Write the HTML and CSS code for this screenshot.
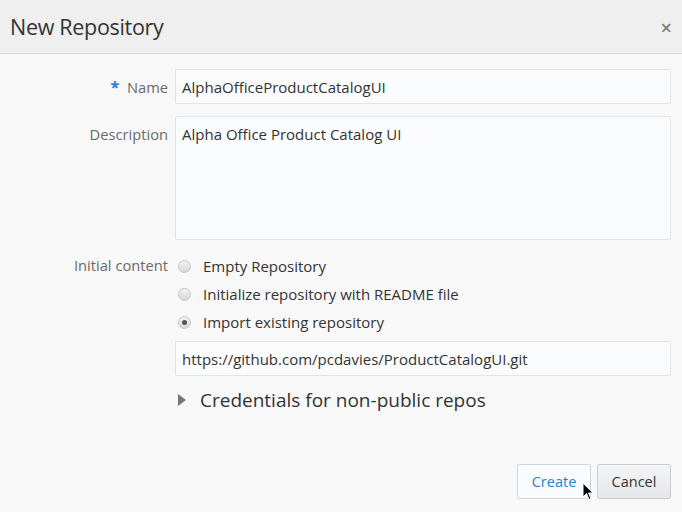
FILE: index.html
```html
<!DOCTYPE html>
<html>
<head>
<meta charset="utf-8">
<link rel="stylesheet" href="styles.css">
</head>
<body>
<div class="dialog">
  <div class="header">
    <h1 class="title">New Repository</h1>
    <span class="close">×</span>
  </div>
  <div class="content">
    <div class="row">
      <label class="label"><span class="req">*</span> Name</label>
      <div class="field"><div class="input">AlphaOfficeProductCatalogUI</div></div>
    </div>
    <div class="row">
      <label class="label">Description</label>
      <div class="field"><div class="input textarea">Alpha Office Product Catalog UI</div></div>
    </div>
    <div class="row row-radio">
      <label class="label">Initial content</label>
      <div class="field">
        <div class="radio"><span class="dot"></span>Empty Repository</div>
        <div class="radio"><span class="dot"></span>Initialize repository with README file</div>
        <div class="radio"><span class="dot checked"></span>Import existing repository</div>
        <div class="input url">https://github.com/pcdavies/ProductCatalogUI.git</div>
        <div class="cred"><span class="tri"></span>Credentials for non-public repos</div>
      </div>
    </div>
  </div>
  <div class="footer">
    <button class="btn primary">Create</button>
    <button class="btn">Cancel</button>
    <svg class="cursor" width="12" height="19" viewBox="0 0 12 19"><path d="M1 1 L1 15 L4.5 11.5 L7 17.5 L9 16.5 L6.5 11 L11 11 Z" fill="#000" stroke="#fff" stroke-width="1"/></svg>
  </div>
</div>
</body>
</html>
```
FILE: styles.css
```css
html, body {
  margin: 0;
  padding: 0;
}
body {
  width: 682px;
  height: 512px;
  overflow: hidden;
  background: #f8f8f8;
  font-family: "Open Sans", "Noto Sans", sans-serif;
  font-size: 15px;
  color: #333;
}
.dialog {
  display: flex;
  flex-direction: column;
  height: 512px;
}
.header {
  height: 54px;
  background: #efefef;
  border-bottom: 1px solid #d3d8db;
  display: flex;
  align-items: center;
  justify-content: space-between;
  padding: 0 10px 0 10px;
  box-sizing: border-box;
}
.title {
  margin: 0;
  font-weight: normal;
  font-size: 21.5px;
  color: #333;
  letter-spacing: -0.3px;
  padding-bottom: 0;
}
.close {
  font-size: 20px;
  color: #7a7f83;
  font-weight: 600;
  line-height: 1;
  padding-top: 2px;
}
.content {
  padding: 15px 11px 0 0;
  display: flex;
  flex-direction: column;
  gap: 12px;
}
.row {
  display: flex;
  align-items: flex-start;
}
.label {
  width: 175px;
  text-align: right;
  color: #6a6a6a;
  padding-right: 7px;
  box-sizing: border-box;
  padding-top: 9px;
  line-height: 19px;
  font-size: 14.7px;
  flex: none;
}
.req {
  color: #1a7fd0;
  font-weight: bold;
  font-size: 16px;
  margin-right: 4px;
}
.field {
  flex: 1;
  display: flex;
  flex-direction: column;
}
.input {
  height: 35px;
  box-sizing: border-box;
  border: 1px solid #e1e4e6;
  border-radius: 2px;
  background: #fbfcfd;
  padding: 8px 6px 6px;
  line-height: 19px;
  color: #333;
}
.textarea {
  height: 124px;
}
.row-radio {
  margin-top: 0;
}
.row-radio .label {
  padding-top: 4px;
}
.radio {
  height: 28px;
  display: flex;
  align-items: center;
  color: #333;
  margin-top: -4px;
  margin-bottom: 4px;
}
.radio:first-child {
  margin-top: 0;
}
.dot {
  width: 13px;
  height: 13px;
  border-radius: 50%;
  border: 1px solid #c2c5c7;
  background: linear-gradient(#f3f3f3, #d8d8d8);
  box-sizing: border-box;
  margin: 0 12px 0 3px;
  position: relative;
}
.dot.checked::after {
  content: "";
  position: absolute;
  left: 3px;
  top: 3px;
  width: 5px;
  height: 5px;
  border-radius: 50%;
  background: #555;
}
.url {
  margin-top: 1px;
}
.cred {
  display: flex;
  align-items: center;
  margin-top: 11px;
  font-size: 19px;
  color: #333;
}
.tri {
  width: 0;
  height: 0;
  border-left: 8px solid #777;
  border-top: 6px solid transparent;
  border-bottom: 6px solid transparent;
  margin: 0 14px 0 3px;
}
.footer {
  margin-top: auto;
  display: flex;
  justify-content: flex-end;
  gap: 6px;
  padding: 0 11px 13px 0;
  position: relative;
}
.btn {
  height: 35px;
  border: 1px solid #c9cdd0;
  border-radius: 2px;
  background: linear-gradient(#f3f4f5, #e6e7e8);
  font-family: "Open Sans", "Noto Sans", sans-serif;
  font-size: 14.5px;
  color: #333;
  padding: 0 13px;
  min-width: 74px;
}
.btn.primary {
  background: #f9fbfd;
  color: #2a7fd0;
  border-color: #cdd6de;
}
.cursor {
  position: absolute;
  left: 582px;
  top: 18px;
}
```
